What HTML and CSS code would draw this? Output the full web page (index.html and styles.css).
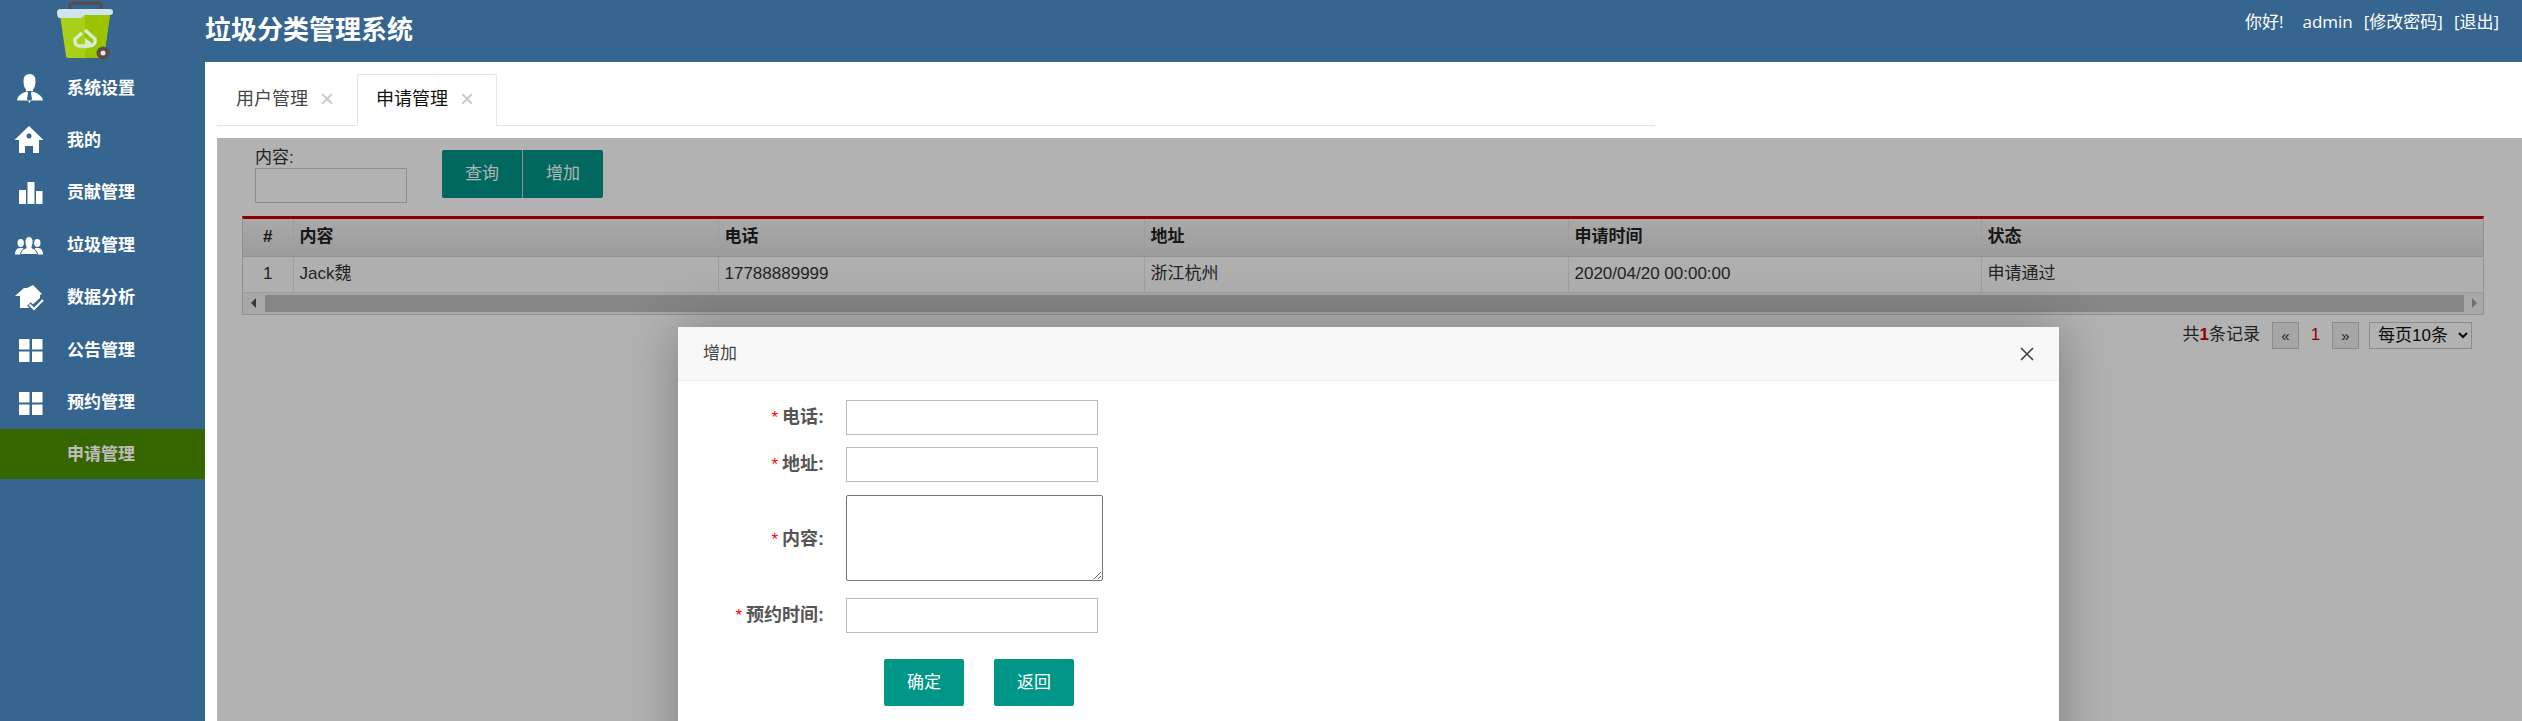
FILE: index.html
```html
<!DOCTYPE html>
<html lang="zh-CN">
  <head>
    <meta charset="utf-8">
    <title>垃圾分类管理系统</title>
    <link rel="stylesheet" href="styles.css">
  </head>
  <body>
    <header class="topbar">
      <div class="logo">
        <svg width="60" height="62" viewBox="0 0 60 62">
          <path d="M15 9 V5 Q15 3 18 3 H43 Q46 3 46 5 V9" fill="none" stroke="#5b4a48" stroke-width="3"/>
          <path d="M5 15 H55 L49 56 Q49 58 46 58 H14 Q11 58 11 56 Z" fill="#a9d018"/>
          <path d="M30 15 H55 L49 56 Q49 58 46 58 H30 Z" fill="#9bc400"/>
          <path d="M5 9 H55 Q58 9 58 12 Q58 15 55 15 H30 L26 18 H5 Q2 18 2 13 Q2 9 5 9 Z" fill="#cfe5ec"/>
          <path d="M30 30 L40 39 Q41 46 34 46 H25 Q19 46 20 39 L27 33" fill="none" stroke="#d8ecd4" stroke-width="3.4"/>
          <path d="M30 38 L37 43 L30 49 Z" fill="#d8ecd4"/>
          <circle cx="48" cy="53" r="6.5" fill="#5b4a48"/>
          <circle cx="48" cy="53" r="2.5" fill="#e8e4e0"/>
        </svg>
      </div>
      <h1 class="title">垃圾分类管理系统</h1>
      <div class="user">
        <span>你好!</span>
        <span class="user-name">admin</span>
        <a href="#">[修改密码]</a>
        <a href="#">[退出]</a>
      </div>
    </header>

    <div class="layout">
      <nav class="sidebar">
        <a class="nav-item" href="#">
          <svg class="nav-icon" viewBox="0 0 30 30"><path d="M15.500 0 Q21.500 0 21.500 7 Q21.500 13 19 15.500 V17 H12 V15.500 Q9.500 13 9.500 7 Q9.500 0 15.500 0 Z"/><path d="M3 26.500 Q3 21.500 11 18 L13.500 17.500 L14 19.500 L13 25 L15.500 29 L18 25 L17 19.500 L17.500 17.500 L20 18 Q28.500 21.500 29 26.500 Z"/></svg>
          <span>系统设置</span>
        </a>
        <a class="nav-item" href="#">
          <svg class="nav-icon" viewBox="0 0 30 30"><path fill-rule="evenodd" d="M15 0 L29.500 14 H25 V27 H19 V20 H11 V27 H5 V14 H0.500 Z M15 7.500 A2.500 2.500 0 1 0 15.100 7.500 Z"/></svg>
          <span>我的</span>
        </a>
        <a class="nav-item" href="#">
          <svg class="nav-icon" viewBox="0 0 30 30"><rect x="5" y="12" width="7" height="14"/><rect x="13.500" y="4" width="7" height="22"/><rect x="22" y="13" width="6.500" height="13"/></svg>
          <span>贡献管理</span>
        </a>
        <a class="nav-item" href="#">
          <svg class="nav-icon" viewBox="0 0 30 30"><ellipse cx="6.700" cy="12" rx="3.200" ry="4"/><path d="M1 23.500 Q1 18 5 17 H9 L11 23.500 Z"/><ellipse cx="23.300" cy="12" rx="3.200" ry="4"/><path d="M29 23.500 Q29 18 25 17 H21 L19 23.500 Z"/><path d="M6.500 23.500 Q7 18.500 12 17 V15.500 Q10.500 13 11 9.500 Q11.500 5.500 15 5.500 Q18.500 5.500 19 9.500 Q19.500 13 18 15.500 V17 Q23 18.500 23.500 23.500 Z" stroke="#36668f" stroke-width="1"/></svg>
          <span>垃圾管理</span>
        </a>
        <a class="nav-item" href="#">
          <svg class="nav-icon" viewBox="0 0 30 30"><path d="M19 2 L28 11 L26 12 V15 L17 23 V25 H6 V13 H1 L10 5 H13 Z"/><path d="M15 21 L20 26 L29 17" fill="none" stroke="#36668f" stroke-width="5"/><path d="M15.500 21.500 L20 26 L29 17" fill="none" stroke="#fff" stroke-width="2.200"/></svg>
          <span>数据分析</span>
        </a>
        <a class="nav-item" href="#">
          <svg class="nav-icon" viewBox="0 0 30 30"><rect x="5" y="4" width="10.500" height="10.500"/><rect x="18" y="4" width="10.500" height="10.500"/><rect x="5" y="16.500" width="10.500" height="10.500"/><rect x="18" y="16.500" width="10.500" height="10.500"/></svg>
          <span>公告管理</span>
        </a>
        <a class="nav-item" href="#">
          <svg class="nav-icon" viewBox="0 0 30 30"><rect x="5" y="4" width="10.500" height="10.500"/><rect x="18" y="4" width="10.500" height="10.500"/><rect x="5" y="16.500" width="10.500" height="10.500"/><rect x="18" y="16.500" width="10.500" height="10.500"/></svg>
          <span>预约管理</span>
        </a>
        <a class="nav-item active" href="#">
          <span class="nav-icon"></span>
          <span>申请管理</span>
        </a>
      </nav>

      <main class="content">
        <div class="tabs">
          <div class="tab">用户管理<span class="tab-close">×</span></div>
          <div class="tab current">申请管理<span class="tab-close">×</span></div>
        </div>

        <section class="panel">
          <form class="search">
            <div class="search-field">
              <label for="keyword">内容:</label>
              <input type="text" id="keyword" class="search-input">
            </div>
            <div class="btn-group">
              <button type="button" class="btn">查询</button>
              <button type="button" class="btn">增加</button>
            </div>
          </form>

          <div class="table-wrap">
            <table class="grid">
              <colgroup>
                <col class="col-num">
                <col class="col-content">
                <col class="col-phone">
                <col class="col-address">
                <col class="col-time">
                <col>
              </colgroup>
              <thead>
                <tr>
                  <th class="num">#</th>
                  <th>内容</th>
                  <th>电话</th>
                  <th>地址</th>
                  <th>申请时间</th>
                  <th>状态</th>
                </tr>
              </thead>
              <tbody>
                <tr>
                  <td class="num">1</td>
                  <td>Jack魏</td>
                  <td>17788889999</td>
                  <td>浙江杭州</td>
                  <td>2020/04/20 00:00:00</td>
                  <td>申请通过</td>
                </tr>
              </tbody>
            </table>
            <div class="scrollbar">
              <span class="arrow-left"></span>
              <span class="thumb"></span>
              <span class="arrow-right"></span>
            </div>
          </div>

          <div class="pager">
            <span>共<b>1</b>条记录</span>
            <a class="page-btn prev" href="#">«</a>
            <span class="page-now">1</span>
            <a class="page-btn" href="#">»</a>
            <select class="page-size">
              <option>每页10条</option>
            </select>
          </div>

          <div class="shade"></div>

          <div class="dialog">
            <div class="dialog-title">
              <span>增加</span>
              <svg class="dialog-close" width="14" height="14" viewBox="0 0 14 14"><path d="M1 1 L13 13 M13 1 L1 13" stroke="#444" stroke-width="1.700"/></svg>
            </div>
            <form class="dialog-form">
              <div class="form-row">
                <label class="form-label"><i>*</i>电话:</label>
                <input type="text" class="form-input">
              </div>
              <div class="form-row">
                <label class="form-label"><i>*</i>地址:</label>
                <input type="text" class="form-input">
              </div>
              <div class="form-row">
                <label class="form-label"><i>*</i>内容:</label>
                <textarea class="form-text"></textarea>
              </div>
              <div class="form-row">
                <label class="form-label"><i>*</i>预约时间:</label>
                <input type="text" class="form-input">
              </div>
              <div class="form-actions">
                <button type="button" class="btn-solid">确定</button>
                <button type="button" class="btn-solid">返回</button>
              </div>
            </form>
          </div>
        </section>
      </main>
    </div>
  </body>
</html>
```

FILE: styles.css
```css
* {
    box-sizing: border-box;
}
html, body {
    height: 100%;
}
body {
    margin: 0;
    display: flex;
    flex-direction: column;
    overflow: hidden;
    background: #fff;
    color: #333;
    font: 17px/1.4 "Liberation Sans", "Noto Sans CJK SC", sans-serif;
}
a {
    color: inherit;
    text-decoration: none;
}

/* top bar */
.topbar {
    height: 62px;
    flex: none;
    display: flex;
    background: #36668f;
    color: #fff;
}
.logo {
    width: 205px;
    flex: none;
    padding-left: 55px;
}
.logo svg {
    display: block;
}
.title {
    margin: 0;
    font-size: 26px;
    line-height: 60px;
    font-weight: bold;
}
.user {
    margin-left: auto;
    padding: 10px 23px 0 0;
    display: flex;
    gap: 11px;
    font: 17px/24px "Open Sans", "Noto Sans CJK SC", sans-serif;
}
.user-name {
    margin-left: 8px;
}

/* sidebar */
.layout {
    flex: 1;
    min-height: 0;
    display: flex;
}
.sidebar {
    width: 205px;
    flex: none;
    background: #36668f;
}
.nav-item {
    height: 50px;
    margin-bottom: 2.400px;
    padding: 3px 0 0 14px;
    display: flex;
    align-items: center;
    gap: 23px;
    color: #fff;
    font-size: 17px;
    font-weight: bold;
}
.nav-item.active {
    background: #366600;
    color: #bdbdbd;
}
.nav-icon {
    width: 30px;
    height: 30px;
    flex: none;
    fill: #fff;
}

/* tabs */
.content {
    flex: 1;
    min-width: 0;
    padding: 12px 0 0 12px;
    display: flex;
    flex-direction: column;
}
.tabs {
    width: 1438px;
    height: 52px;
    flex: none;
    display: flex;
    border-bottom: 1px solid #e6e6e6;
}
.tab {
    width: 140px;
    height: 52px;
    padding: 10px 0 0 18px;
    font-size: 18px;
    line-height: 28px;
    color: #444;
    border: 1px solid transparent;
    border-bottom: 0;
}
.tab.current {
    color: #111;
    background: #fff;
    border-color: #e6e6e6;
    border-radius: 2px 2px 0 0;
}
.tab-close {
    margin-left: 12px;
    font-size: 24px;
    line-height: 20px;
    color: #c8c8c8;
    vertical-align: -2px;
}

/* panel under the shade */
.panel {
    position: relative;
    flex: 1;
    min-height: 0;
    margin-top: 12px;
    overflow: hidden;
}
.search {
    display: flex;
    padding: 9px 0 0 38px;
    height: 64px;
}
.search-field label {
    display: block;
    height: 21px;
    line-height: 21px;
}
.search-input {
    display: block;
    width: 152px;
    height: 35px;
    border: 1px solid #ccc;
    background: #fff;
}
.btn-group {
    display: flex;
    margin: 3px 0 0 35px;
    height: 48px;
    border-radius: 2px;
    overflow: hidden;
}
.btn {
    width: 81px;
    border: 0;
    border-left: 1px solid #cdcdcd;
    background: #009688;
    color: #fff;
    font: inherit;
}
.btn:first-child {
    width: 80px;
    border-left: 0;
}
.table-wrap {
    margin: 14px 38px 0 25px;
    border: 1px solid #cfcfcf;
    border-top: 3px solid #d00000;
}
.grid {
    width: 100%;
    border-collapse: collapse;
    table-layout: fixed;
}
.col-num {
    width: 50px;
}
.col-content {
    width: 425px;
}
.col-phone {
    width: 426px;
}
.col-address {
    width: 424px;
}
.col-time {
    width: 413px;
}
.grid th, .grid td {
    padding: 0 6px;
    text-align: left;
    border-left: 1px solid #e2e2e2;
    font-weight: normal;
}
.grid th:first-child, .grid td:first-child {
    border-left: 0;
}
.grid th {
    height: 37px;
    font-weight: bold;
    color: #222;
    background: linear-gradient(#f2f2f2, #e0e0e0);
    border-bottom: 1px solid #cfcfcf;
}
.grid td {
    height: 36px;
    background: #fbfbfb;
    border-bottom: 1px solid #e2e2e2;
}
.grid .num {
    text-align: center;
}
.scrollbar {
    height: 21px;
    display: flex;
    align-items: center;
    background: #f1f1f1;
}
.arrow-left, .arrow-right {
    width: 0;
    height: 0;
    border: 5px solid transparent;
    border-left-width: 0;
    border-right-width: 0;
}
.arrow-left {
    margin: 0 9px 0 8px;
    border-right: 5px solid #505050;
}
.arrow-right {
    margin: 0 6px 0 8px;
    border-left: 5px solid #a3a3a3;
}
.thumb {
    flex: 1;
    height: 17px;
    background: #c1c1c1;
}
.pager {
    margin: 7px 50px 0 0;
    display: flex;
    justify-content: flex-end;
    align-items: center;
    font-size: 17px;
}
.pager b {
    color: #d00000;
}
.page-btn {
    width: 27px;
    height: 27px;
    border: 1px solid #c8c8c8;
    background: #eee;
    text-align: center;
    font-size: 15px;
    line-height: 25px;
    color: #333;
}
.page-btn.prev {
    margin-left: 12px;
}
.page-now {
    width: 33px;
    text-align: center;
    color: #c00;
}
.page-size {
    width: 103px;
    height: 27px;
    margin-left: 10px;
    padding: 0 0 0 4px;
    border: 1px solid #c8c8c8;
    background: #fff;
    color: #111;
    font: inherit;
}

/* dialog */
.shade {
    position: absolute;
    inset: 0;
    background: rgba(0, 0, 0, .3);
}
.dialog {
    position: absolute;
    left: 461px;
    top: 189px;
    width: 1381px;
    height: 500px;
    background: #fff;
    box-shadow: 1px 1px 50px rgba(0, 0, 0, .3);
}
.dialog-title {
    height: 54px;
    padding: 0 25px;
    display: flex;
    align-items: center;
    justify-content: space-between;
    background: #f8f8f8;
    border-bottom: 1px solid #eee;
    font-size: 17px;
    color: #444;
}
.dialog-form {
    padding-top: 19px;
}
.form-row {
    display: flex;
    align-items: center;
    margin-bottom: 12px;
}
.form-label {
    width: 146px;
    margin-right: 22px;
    text-align: right;
    font-size: 18px;
    font-weight: bold;
    color: #555;
}
.form-label i {
    margin-right: 4px;
    font-size: 17px;
    font-style: normal;
    font-weight: normal;
    color: #f00;
}
.form-input {
    width: 252px;
    height: 35px;
    border: 1px solid #bbb;
    background: #fff;
}
.form-text {
    width: 257px;
    height: 86px;
    margin: 1px 0 5px;
    border: 1px solid #767676;
    border-radius: 2px;
}
.form-actions {
    display: flex;
    gap: 30px;
    padding: 14px 0 0 206px;
}
.btn-solid {
    width: 80px;
    height: 47px;
    border: 0;
    border-radius: 2px;
    background: #009688;
    color: #fff;
    font: inherit;
}
```
